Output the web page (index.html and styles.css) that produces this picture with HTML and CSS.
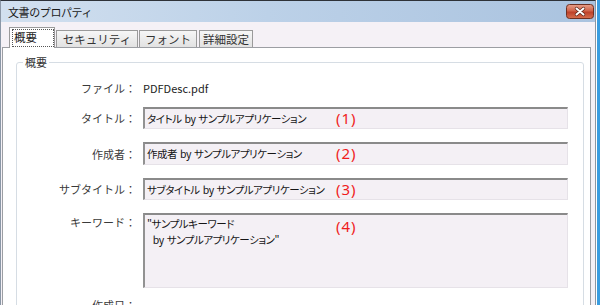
FILE: index.html
```html
<!DOCTYPE html>
<html lang="ja">
<head>
<meta charset="utf-8">
<title>文書のプロパティ</title>
<link rel="stylesheet" href="styles.css">
</head>
<body>
<div class="window">
  <div class="titlebar">
    <span class="title">文書のプロパティ</span>
    <button class="close" aria-label="閉じる">
      <svg width="28" height="15" viewBox="0 0 28 15">
        <defs>
          <linearGradient id="cg" x1="0" y1="0" x2="0" y2="1">
            <stop offset="0" stop-color="#e8a18c"/>
            <stop offset="0.45" stop-color="#d0644a"/>
            <stop offset="0.55" stop-color="#bd412a"/>
            <stop offset="1" stop-color="#d7704f"/>
          </linearGradient>
        </defs>
        <rect x="0.5" y="0.5" width="27" height="14" rx="3" fill="url(#cg)" stroke="#6e3022"/>
        <path d="M10.5 4.5 L17.5 10.5 M17.5 4.5 L10.5 10.5" stroke="#5a2418" stroke-width="3.4" stroke-linecap="round"/>
        <path d="M10.5 4.5 L17.5 10.5 M17.5 4.5 L10.5 10.5" stroke="#ffffff" stroke-width="2" stroke-linecap="round"/>
      </svg>
    </button>
  </div>
  <div class="body">
    <div class="tabs">
      <div class="tab active"><span class="focus">概要</span></div>
      <div class="tab tab-security">セキュリティ</div>
      <div class="tab tab-font">フォント</div>
      <div class="tab tab-detail">詳細設定</div>
    </div>
    <div class="panel">
      <fieldset class="group">
        <legend>概要</legend>
        <div class="form">
          <div class="label label-file">ファイル：</div>
          <div class="value">PDFDesc.pdf</div>

          <div class="label">タイトル：</div>
          <div class="field">タイトル by サンプルアプリケーション<span class="note">(1)</span></div>

          <div class="label">作成者：</div>
          <div class="field field-tall">作成者 by サンプルアプリケーション<span class="note">(2)</span></div>

          <div class="label">サブタイトル：</div>
          <div class="field">サブタイトル by サンプルアプリケーション<span class="note">(3)</span></div>

          <div class="label label-top">キーワード：</div>
          <div class="field area">"サンプルキーワード
  by サンプルアプリケーション"<span class="note">(4)</span></div>

          <div class="label label-last">作成日：</div>
          <div class="value"></div>
        </div>
      </fieldset>
    </div>
  </div>
</div>
</body>
</html>
```

FILE: styles.css
```css
html, body {
  margin: 0;
  padding: 0;
}

body {
  width: 600px;
  height: 305px;
  overflow: hidden;
  background: linear-gradient(to right, #ffffff 597px, #3a9de0 597px);
  font-family: "Noto Sans CJK JP", "Noto Sans", sans-serif;
  color: #333333;
}

.window {
  width: 596px;
  height: 305px;
  box-sizing: border-box;
  border-top: 1px solid #2e3238;
  border-left: 1px solid #8b97a6;
  border-right: 1px solid #8e96a0;
  background: #f5f1f6;
  display: flex;
  flex-direction: column;
}

.titlebar {
  height: 21px;
  flex: none;
  display: flex;
  align-items: center;
  justify-content: space-between;
  padding: 0 1px 0 7px;
  background: linear-gradient(to right, #d2e0ef 0%, #bcd1e8 45%, #aac3df 100%);
}

.title {
  font-size: 11px;
  line-height: 14px;
  color: #1b1b1b;
  letter-spacing: -0.4px;
  padding-top: 1px;
}

.close {
  border: 0;
  padding: 0;
  margin: 0;
  background: none;
  width: 28px;
  height: 15px;
  display: block;
}

.close svg {
  display: block;
}

.body {
  flex: 1;
  display: flex;
  flex-direction: column;
  padding: 5px 4px 0 1px;
  min-height: 0;
}

.tabs {
  display: flex;
  align-items: flex-end;
  gap: 1px;
  margin-left: 7px;
  height: 21px;
  margin-bottom: -1px;
  position: relative;
  z-index: 1;
  flex: none;
}

.tab {
  box-sizing: border-box;
  height: 17px;
  margin-bottom: 1px;
  border: 1px solid #9a9a9a;
  border-bottom: none;
  background: linear-gradient(to bottom, #f6f6f6, #e2e2e2);
  font-size: 11.5px;
  line-height: 16px;
  text-align: center;
  color: #333333;
}

.tab-security { width: 82px; }
.tab-font { width: 58px; }
.tab-detail { width: 54px; margin-left: 1px; }

.tab.active {
  width: 46px;
  height: 21px;
  margin-bottom: 0;
  background: #ffffff;
  text-align: left;
  padding: 1px 0 0 2px;
}

.focus {
  display: block;
  box-sizing: border-box;
  width: 42px;
  height: 18px;
  outline: 1px dotted #555555;
  outline-offset: -1px;
  padding-left: 2px;
  line-height: 17px;
  font-size: 11.5px;
  color: #222222;
}

.panel {
  flex: 1;
  background: #ffffff;
  border: 1px solid #9c9ea3;
  border-bottom: none;
  min-height: 0;
}

.group {
  margin: 7px 6px 0 13px;
  padding: 0;
  border: 1px solid #d6dde4;
  border-radius: 3px;
  min-width: 0;
}

.group legend {
  font-size: 11px;
  line-height: 14px;
  padding: 0 2px;
  margin-left: 6px;
  color: #333333;
}

.form {
  display: grid;
  grid-template-columns: 119px 425px;
  column-gap: 7px;
  row-gap: 13px;
  align-items: center;
  padding-top: 13px;
}

.label {
  text-align: right;
  font-size: 11px;
  line-height: 16px;
  color: #3a3a3a;
  white-space: nowrap;
}

.label-file {
  line-height: 12px;
}

.label-top {
  align-self: start;
  padding-top: 1px;
}

.label-last {
  line-height: 12px;
  margin-top: -2px;
}

.value {
  font-size: 11px;
  line-height: 12px;
  color: #222222;
}

.field {
  position: relative;
  box-sizing: border-box;
  height: 22px;
  border-style: solid;
  border-width: 2px 1px 1px 2px;
  border-color: #8a8a8a #e6e2e8 #e6e2e8 #929292;
  background: #f4f0f5;
  padding: 0 2px;
  font-size: 10.5px;
  line-height: 19px;
  font-feature-settings: "palt" 1;
  letter-spacing: -0.45px;
  word-spacing: 1px;
  color: #151515;
  white-space: pre;
}

.field-tall {
  height: 23px;
  line-height: 20px;
}

.area {
  height: 75px;
  line-height: 16px;
  padding-top: 1px;
}

.note {
  position: absolute;
  left: 191px;
  top: 0;
  line-height: 19px;
  font-family: "Noto Sans", sans-serif;
  font-size: 15px;
  letter-spacing: 1px;
  font-feature-settings: normal;
  word-spacing: 0;
  color: #f01c1c;
}

.area .note {
  line-height: 22px;
}
```
